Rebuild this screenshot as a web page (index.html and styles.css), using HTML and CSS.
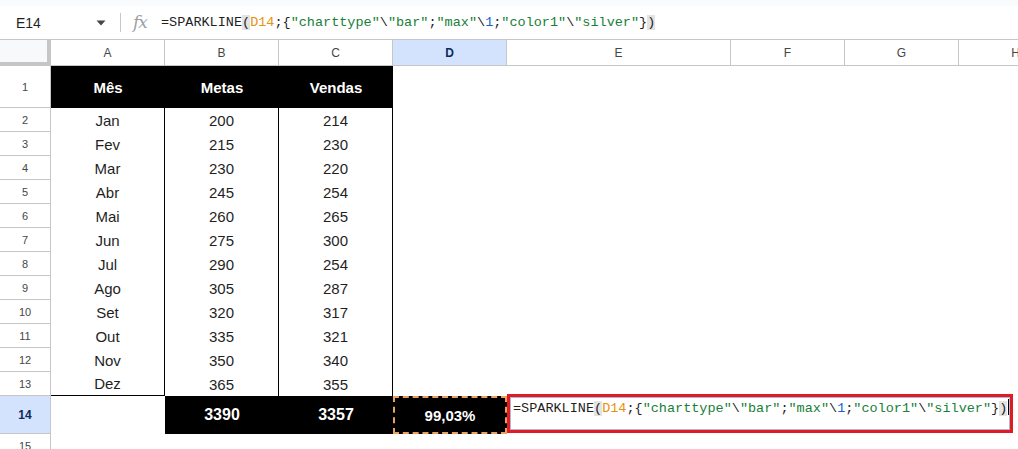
FILE: index.html
```html
<!DOCTYPE html>
<html lang="pt">
<head>
<meta charset="utf-8">
<title>Planilha</title>
<link rel="stylesheet" href="styles.css">
</head>
<body>
<div class="topstrip"></div>
<div class="fbar">
  <div class="namebox">
    <span class="ref">E14</span>
    <svg class="drop" width="10" height="6" viewBox="0 0 10 6"><path d="M0.5 0.5 L9.5 0.5 L5 5.5 Z" fill="#444746"/></svg>
  </div>
  <div class="sep"></div>
  <div class="fx">fx</div>
  <div class="formula"><span class="k">=SPARKLINE</span><span class="k pm">(</span><span class="r">D14</span><span class="k">;{</span><span class="s">"charttype"</span><span class="k">\</span><span class="s">"bar"</span><span class="k">;</span><span class="s">"max"</span><span class="k">\</span><span class="n">1</span><span class="k">;</span><span class="s">"color1"</span><span class="k">\</span><span class="s">"silver"</span><span class="k">}</span><span class="k pm">)</span></div>
</div>
<div class="sheet">
  <div class="corner"></div>
  <div class="ch">A</div><div class="ch">B</div><div class="ch">C</div><div class="ch sel">D</div><div class="ch">E</div><div class="ch">F</div><div class="ch">G</div><div class="ch">H</div>

  <div class="rh">1</div>
  <div class="hd">Mês</div><div class="hd">Metas</div><div class="hd">Vendas</div>
  <div class="c"></div><div class="c"></div><div class="c"></div><div class="c"></div><div class="c"></div>

  <div class="rh">2</div><div class="d">Jan</div><div class="d">200</div><div class="d">214</div><div class="c"></div><div class="c"></div><div class="c"></div><div class="c"></div><div class="c"></div>
  <div class="rh">3</div><div class="d">Fev</div><div class="d">215</div><div class="d">230</div><div class="c"></div><div class="c"></div><div class="c"></div><div class="c"></div><div class="c"></div>
  <div class="rh">4</div><div class="d">Mar</div><div class="d">230</div><div class="d">220</div><div class="c"></div><div class="c"></div><div class="c"></div><div class="c"></div><div class="c"></div>
  <div class="rh">5</div><div class="d">Abr</div><div class="d">245</div><div class="d">254</div><div class="c"></div><div class="c"></div><div class="c"></div><div class="c"></div><div class="c"></div>
  <div class="rh">6</div><div class="d">Mai</div><div class="d">260</div><div class="d">265</div><div class="c"></div><div class="c"></div><div class="c"></div><div class="c"></div><div class="c"></div>
  <div class="rh">7</div><div class="d">Jun</div><div class="d">275</div><div class="d">300</div><div class="c"></div><div class="c"></div><div class="c"></div><div class="c"></div><div class="c"></div>
  <div class="rh">8</div><div class="d">Jul</div><div class="d">290</div><div class="d">254</div><div class="c"></div><div class="c"></div><div class="c"></div><div class="c"></div><div class="c"></div>
  <div class="rh">9</div><div class="d">Ago</div><div class="d">305</div><div class="d">287</div><div class="c"></div><div class="c"></div><div class="c"></div><div class="c"></div><div class="c"></div>
  <div class="rh">10</div><div class="d">Set</div><div class="d">320</div><div class="d">317</div><div class="c"></div><div class="c"></div><div class="c"></div><div class="c"></div><div class="c"></div>
  <div class="rh">11</div><div class="d">Out</div><div class="d">335</div><div class="d">321</div><div class="c"></div><div class="c"></div><div class="c"></div><div class="c"></div><div class="c"></div>
  <div class="rh">12</div><div class="d">Nov</div><div class="d">350</div><div class="d">340</div><div class="c"></div><div class="c"></div><div class="c"></div><div class="c"></div><div class="c"></div>
  <div class="rh">13</div><div class="d last">Dez</div><div class="d">365</div><div class="d">355</div><div class="c"></div><div class="c"></div><div class="c"></div><div class="c"></div><div class="c"></div>

  <div class="rh sel">14</div>
  <div class="c"></div>
  <div class="tot">3390</div>
  <div class="tot">3357</div>
  <div class="tot pct">99,03%</div>
  <div class="editcell">
    <div class="editor"><span class="k">=SPARKLINE</span><span class="k pm">(</span><span class="r">D14</span><span class="k">;{</span><span class="s">"charttype"</span><span class="k">\</span><span class="s">"bar"</span><span class="k">;</span><span class="s">"max"</span><span class="k">\</span><span class="n">1</span><span class="k">;</span><span class="s">"color1"</span><span class="k">\</span><span class="s">"silver"</span><span class="k">}</span><span class="k pm">)</span><span class="cursor"></span></div>
  </div>

  <div class="rh">15</div>
</div>
</body>
</html>
```

FILE: styles.css
```css
* { box-sizing: border-box; }
html, body { margin: 0; padding: 0; background: #ffffff; overflow: hidden; }
body { font-family: "Liberation Sans", Arial, sans-serif; color: #1f1f1f; width: 1018px; height: 449px; }

.topstrip { height: 6px; background: #f9fbfd; }

.fbar {
  height: 34px;
  display: flex;
  align-items: center;
  background: #fff;
  border-bottom: 1px solid #c7c7c7;
}
.namebox {
  width: 120px;
  display: flex;
  align-items: center;
  padding-left: 16px;
  padding-right: 14px;
}
.ref { font-size: 14px; color: #1f1f1f; flex: 1; }
.drop { display: block; margin-top: 1px; }
.sep { width: 1px; height: 19px; background: #c7c7c7; }
.fx {
  width: 40px;
  padding-left: 12px;
  font-family: "DejaVu Serif", "Liberation Serif", serif;
  font-style: italic;
  font-size: 17px;
  color: #9aa0a6;
  letter-spacing: -1px;
  margin-top: -2px;
}
.formula, .editor {
  font-family: "Liberation Mono", "DejaVu Sans Mono", monospace;
  font-size: 13.5px;
  white-space: nowrap;
}
.k { color: #1f1f1f; }
.pm { background: #e3e3e3; }
.r { color: #e8910f; }
.s { color: #188038; }
.n { color: #1a5fcc; }

.sheet {
  display: grid;
  width: 1073px;
  grid-template-columns: 51px 114px 114px 114px 114px 224px 114px 114px 114px;
  grid-template-rows: 26px 42px repeat(12, 24px) 38px 24px;
}

.corner {
  background: #f8f9fa;
  border-right: 4px solid #c4c7c5;
  border-bottom: 4px solid #c4c7c5;
}
.ch {
  display: flex;
  align-items: center;
  justify-content: center;
  font-size: 12px;
  color: #444746;
  border-right: 1px solid #c4c7c5;
  border-bottom: 1px solid #c4c7c5;
  padding-top: 1px;
}
.ch.sel { background: #d3e3fd; color: #0b2a5c; font-weight: bold; }

.rh {
  display: flex;
  align-items: center;
  justify-content: center;
  font-size: 11px;
  color: #444746;
  border-right: 1px solid #c4c7c5;
  border-bottom: 1px solid #c4c7c5;
}
.rh.sel { background: #d3e3fd; color: #0b2a5c; font-weight: bold; font-size: 12px; }

.c { background: #fff; }

.hd {
  background: #000;
  color: #fff;
  font-weight: bold;
  font-size: 15px;
  display: flex;
  align-items: center;
  justify-content: center;
}
.d {
  display: flex;
  align-items: center;
  justify-content: center;
  font-size: 15px;
  color: #1f1f1f;
  border-right: 1px solid #000;
}
.d.last { border-bottom: 1px solid #000; }

.tot {
  background: #000;
  color: #fff;
  font-weight: bold;
  font-size: 16px;
  display: flex;
  align-items: center;
  justify-content: center;
}
.tot.pct {
  font-size: 15px;
  border: 2px dashed #e9a15c;
}

.editcell {
  grid-column: span 4;
  position: relative;
}
.editor {
  position: absolute;
  left: 0;
  top: -2px;
  width: 506px;
  height: 39px;
  border: 3px solid #e01b24;
  background: #fff;
  padding: 2px 0 0 3px;
  line-height: 18px;
  box-shadow: inset 0 0 0 1px #aab8d6;
}
.cursor {
  display: inline-block;
  width: 1px;
  height: 16px;
  background: #000;
  vertical-align: -3px;
  margin-left: 1px;
}
```
